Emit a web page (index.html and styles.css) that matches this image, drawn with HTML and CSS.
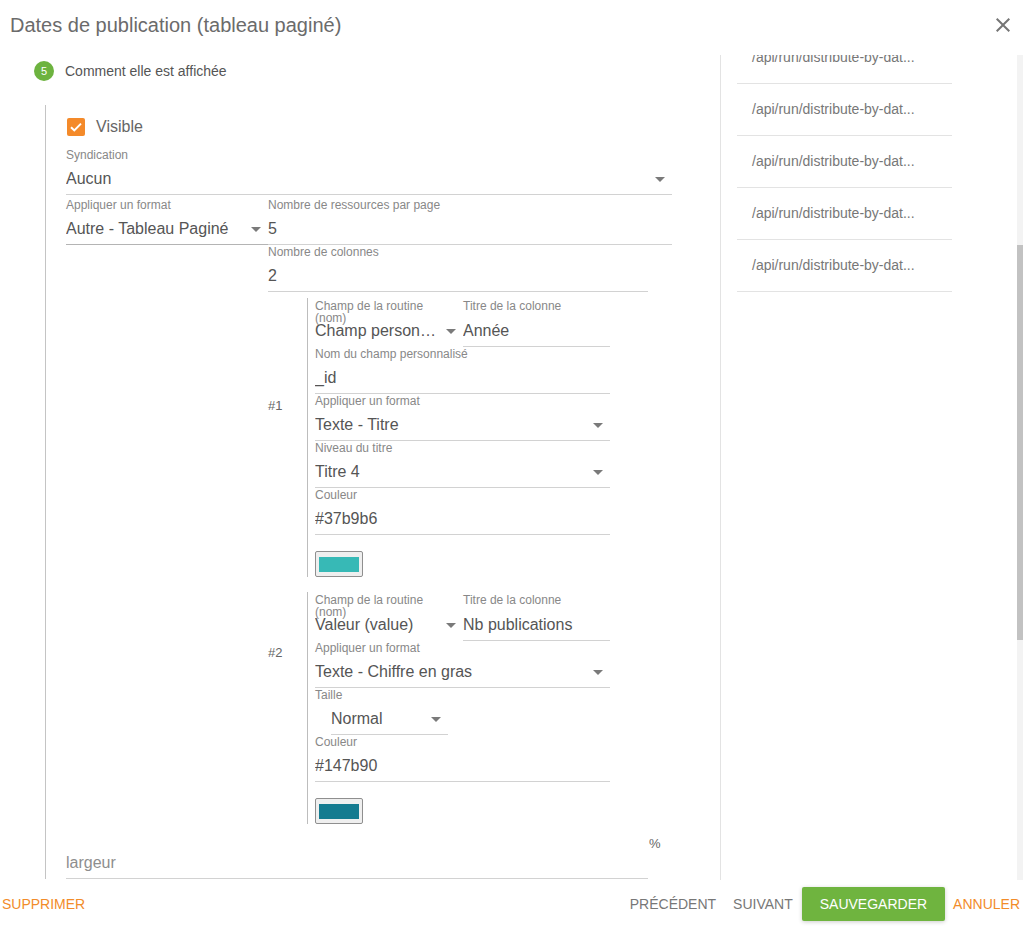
FILE: index.html
```html
<!DOCTYPE html>
<html lang="fr">
<head>
<meta charset="utf-8">
<title>Dates de publication (tableau paginé)</title>
<link rel="stylesheet" href="styles.css">
</head>
<body>
<div class="dialog">
  <header class="dlg-head">
    <h1 class="dlg-title">Dates de publication (tableau paginé)</h1>
    <span class="close-btn" aria-label="Fermer">
      <svg width="24" height="24" viewBox="0 0 24 24"><path d="M19 6.41L17.59 5 12 10.59 6.41 5 5 6.41 10.59 12 5 17.59 6.41 19 12 13.41 17.59 19 19 17.59 13.41 12z" fill="#757575"/></svg>
    </span>
  </header>

  <div class="dlg-body">
    <section class="form-pane">
      <div class="step-head">
        <span class="badge">5</span>
        <span class="step-title">Comment elle est affichée</span>
      </div>

      <div class="step-content">
        <div class="check-row">
          <span class="checkbox">
            <svg width="18" height="18" viewBox="0 0 18 18"><path d="M4 9.2l3.3 3.2L14 5.6" fill="none" stroke="#fff" stroke-width="2"/></svg>
          </span>
          <span class="check-label">Visible</span>
        </div>

        <div class="field w-606 mt-13">
          <div class="field-label">Syndication</div>
          <div class="field-value">
            <span class="val">Aucun</span>
            <svg class="arrow" width="24" height="24" viewBox="0 0 24 24"><path d="M7 10l5 5 5-5z"/></svg>
          </div>
        </div>

        <div class="row mt-3">
          <div class="field w-202">
            <div class="field-label">Appliquer un format</div>
            <div class="field-value dark-line">
              <span class="val">Autre - Tableau Paginé</span>
              <svg class="arrow" width="24" height="24" viewBox="0 0 24 24"><path d="M7 10l5 5 5-5z"/></svg>
            </div>
          </div>
          <div class="field w-404">
            <div class="field-label">Nombre de ressources par page</div>
            <div class="field-value"><span class="val">5</span></div>
          </div>
        </div>

        <div class="field w-380 ml-202">
          <div class="field-label">Nombre de colonnes</div>
          <div class="field-value"><span class="val">2</span></div>
        </div>

        <div class="columns ml-202">
          <div class="col-block">
            <div class="col-num num-1">#1</div>
            <div class="col-body">
              <div class="row">
                <div class="field w-148">
                  <div class="field-label wrap">Champ de la routine (nom)</div>
                  <div class="field-value no-line">
                    <span class="val">Champ personnalisé</span>
                    <svg class="arrow" width="24" height="24" viewBox="0 0 24 24"><path d="M7 10l5 5 5-5z"/></svg>
                  </div>
                </div>
                <div class="field w-147">
                  <div class="field-label wrap">Titre de la colonne</div>
                  <div class="field-value"><span class="val">Année</span></div>
                </div>
              </div>
              <div class="field">
                <div class="field-label">Nom du champ personnalisé</div>
                <div class="field-value"><span class="val">_id</span></div>
              </div>
              <div class="field">
                <div class="field-label">Appliquer un format</div>
                <div class="field-value">
                  <span class="val">Texte - Titre</span>
                  <svg class="arrow" width="24" height="24" viewBox="0 0 24 24"><path d="M7 10l5 5 5-5z"/></svg>
                </div>
              </div>
              <div class="field">
                <div class="field-label">Niveau du titre</div>
                <div class="field-value">
                  <span class="val">Titre 4</span>
                  <svg class="arrow" width="24" height="24" viewBox="0 0 24 24"><path d="M7 10l5 5 5-5z"/></svg>
                </div>
              </div>
              <div class="field">
                <div class="field-label">Couleur</div>
                <div class="field-value"><span class="val">#37b9b6</span></div>
              </div>
              <div class="swatch"><span class="swatch-fill teal"></span></div>
            </div>
          </div>

          <div class="col-block mt-15">
            <div class="col-num num-2">#2</div>
            <div class="col-body">
              <div class="row">
                <div class="field w-148">
                  <div class="field-label wrap">Champ de la routine (nom)</div>
                  <div class="field-value no-line">
                    <span class="val">Valeur (value)</span>
                    <svg class="arrow" width="24" height="24" viewBox="0 0 24 24"><path d="M7 10l5 5 5-5z"/></svg>
                  </div>
                </div>
                <div class="field w-147">
                  <div class="field-label wrap">Titre de la colonne</div>
                  <div class="field-value"><span class="val">Nb publications</span></div>
                </div>
              </div>
              <div class="field">
                <div class="field-label">Appliquer un format</div>
                <div class="field-value">
                  <span class="val">Texte - Chiffre en gras</span>
                  <svg class="arrow" width="24" height="24" viewBox="0 0 24 24"><path d="M7 10l5 5 5-5z"/></svg>
                </div>
              </div>
              <div class="field">
                <div class="field-label">Taille</div>
                <div class="field-value indent w-117">
                  <span class="val">Normal</span>
                  <svg class="arrow" width="24" height="24" viewBox="0 0 24 24"><path d="M7 10l5 5 5-5z"/></svg>
                </div>
              </div>
              <div class="field">
                <div class="field-label">Couleur</div>
                <div class="field-value"><span class="val">#147b90</span></div>
              </div>
              <div class="swatch"><span class="swatch-fill petrol"></span></div>
            </div>
          </div>
        </div>

        <div class="row mt-8">
          <div class="field w-582">
            <div class="field-label"></div>
            <div class="field-value"><span class="val placeholder">largeur</span></div>
          </div>
          <span class="suffix">%</span>
        </div>
      </div>
    </section>

    <aside class="side-pane">
      <div class="side-scroll">
        <ul class="api-list">
          <li>/api/run/distribute-by-dat...</li>
          <li>/api/run/distribute-by-dat...</li>
          <li>/api/run/distribute-by-dat...</li>
          <li>/api/run/distribute-by-dat...</li>
          <li>/api/run/distribute-by-dat...</li>
        </ul>
      </div>
      <div class="scrollbar"><div class="thumb"></div></div>
    </aside>
  </div>

  <footer class="dlg-foot">
    <span class="flat-btn orange first">SUPPRIMER</span>
    <div class="actions">
      <span class="flat-btn grey">PRÉCÉDENT</span>
      <span class="flat-btn grey">SUIVANT</span>
      <span class="raised-btn">SAUVEGARDER</span>
      <span class="flat-btn orange">ANNULER</span>
    </div>
  </footer>
</div>
</body>
</html>
```

FILE: styles.css
```css
* { box-sizing: border-box; }

html, body {
  margin: 0;
  padding: 0;
  background: #fff;
}

body {
  font-family: "Liberation Sans", Arial, sans-serif;
  color: #555;
}

.dialog {
  width: 1024px;
  height: 927px;
  display: flex;
  flex-direction: column;
  overflow: hidden;
}

/* header */
.dlg-head {
  height: 55px;
  padding-bottom: 6px;
  display: flex;
  align-items: center;
  justify-content: space-between;
  flex-shrink: 0;
}

.dlg-title {
  margin: 0 0 0 10px;
  font-size: 20px;
  line-height: 24px;
  font-weight: normal;
  color: #6b6b6b;
}

.close-btn {
  display: flex;
  width: 24px;
  height: 24px;
  margin: 1px 9px 0 0;
}

/* body */
.dlg-body {
  height: 825px;
  display: flex;
  flex-shrink: 0;
}

.form-pane {
  width: 720px;
  height: 825px;
  overflow: hidden;
  padding-top: 6px;
  flex-shrink: 0;
}

.step-head {
  display: flex;
  align-items: center;
  height: 20px;
  padding-left: 34px;
}

.badge {
  width: 20px;
  height: 20px;
  border-radius: 50%;
  background: #6db33f;
  color: #fff;
  font-size: 11px;
  line-height: 20px;
  text-align: center;
}

.step-title {
  margin-left: 11px;
  font-size: 14px;
  color: #555;
}

.step-content {
  margin: 24px 0 0 45px;
  border-left: 1px solid #c4c4c4;
  padding: 12px 0 0 20px;
}

.check-row {
  display: flex;
  align-items: center;
  height: 18px;
  margin-top: 1px;
  margin-bottom: -1px;
}

.checkbox {
  width: 18px;
  height: 18px;
  margin-left: 1px;
  border-radius: 2px;
  background: #f48a2a;
  display: flex;
}

.check-label {
  margin-left: 11px;
  font-size: 16px;
  color: #666;
}

/* fields */
.row { display: flex; }

.field {
  display: flex;
  flex-direction: column;
  flex-shrink: 0;
}

.field-label {
  height: 14px;
  font-size: 12px;
  line-height: 14px;
  color: #888;
  white-space: nowrap;
}

.field-label.wrap {
  white-space: normal;
  line-height: 12px;
  max-width: 125px;
  position: relative;
  z-index: 1;
}

.field-value {
  margin-top: 5px;
  height: 28px;
  padding-bottom: 3px;
  display: flex;
  align-items: center;
  border-bottom: 1px solid #d2d2d2;
  font-size: 16px;
  line-height: 24px;
  color: #555;
}

.field-value.no-line { border-bottom-color: transparent; }
.field-value.dark-line { border-bottom-color: #b4b4b4; }
.field-value.indent { margin-left: 16px; }

.val {
  flex: 1;
  min-width: 0;
  white-space: nowrap;
  overflow: hidden;
  text-overflow: ellipsis;
}

.placeholder { color: #8e8e8e; }

.arrow {
  flex-shrink: 0;
  fill: #7a7a7a;
}

.w-606 { width: 606px; }
.w-582 { width: 582px; }
.w-404 { width: 404px; }
.w-380 { width: 380px; }
.w-202 { width: 202px; }
.w-148 { width: 148px; }
.w-147 { width: 147px; }
.w-117 { width: 117px; }

.ml-202 { margin-left: 202px; }
.mt-3 { margin-top: 3px; }
.mt-8 { margin-top: 8px; }
.mt-13 { margin-top: 13px; }
.mt-15 { margin-top: 15px; }

/* column blocks */
.columns { margin-top: 6px; }

.col-block { display: flex; }

.col-num {
  width: 39px;
  font-size: 13px;
  line-height: 15px;
  color: #666;
  flex-shrink: 0;
}

.num-1 { padding-top: 100px; }
.num-2 { padding-top: 53px; }

.col-body {
  width: 303px;
  border-left: 1px solid #bdbdbd;
  padding: 2px 0 0 7px;
}

.swatch {
  width: 48px;
  height: 26px;
  margin-top: 16px;
  border: 1px solid #8f8f8f;
  border-radius: 2px;
  background: #efefef;
  padding: 5px 3px 4px;
}

.swatch-fill {
  display: block;
  width: 40px;
  height: 15px;
}

.swatch-fill.teal { background: #37b9b6; }
.swatch-fill.petrol { background: #147b90; }

.suffix {
  margin: 4px 0 0 1px;
  font-size: 13px;
  line-height: 15px;
  color: #666;
}

/* side pane */
.side-pane {
  flex: 1;
  display: flex;
  border-left: 1px solid #e3e3e3;
  height: 825px;
}

.side-scroll {
  flex: 1;
  overflow: hidden;
  padding-left: 16px;
}

.api-list {
  list-style: none;
  margin: -23px 0 0 0;
  padding: 0;
  width: 215px;
}

.api-list li {
  height: 52px;
  line-height: 51px;
  border-bottom: 1px solid #e3e3e3;
  padding-left: 15px;
  font-size: 14px;
  color: #777;
  white-space: nowrap;
}

.scrollbar {
  width: 6px;
  margin-right: 1px;
  background: #f3f3f3;
}

.thumb {
  margin-top: 190px;
  height: 395px;
  background: #c2c2c2;
}

/* footer */
.dlg-foot {
  height: 47px;
  display: flex;
  align-items: center;
  justify-content: space-between;
  flex-shrink: 0;
}

.actions {
  display: flex;
  align-items: center;
  padding-right: 4px;
}

.flat-btn {
  font-size: 14px;
  line-height: 16px;
  white-space: nowrap;
}

.flat-btn.first { margin-left: 2px; }
.flat-btn.orange { color: #f28c2a; }
.flat-btn.grey { color: #777; }
.flat-btn.grey + .flat-btn.grey { margin-left: 17px; }

.raised-btn {
  margin: 0 8px 0 9px;
  height: 34px;
  padding: 0 18px;
  display: flex;
  align-items: center;
  background: #6fb43f;
  color: #fff;
  font-size: 14px;
  border-radius: 2px;
  box-shadow: 0 1px 4px rgba(0,0,0,0.2);
}
```
